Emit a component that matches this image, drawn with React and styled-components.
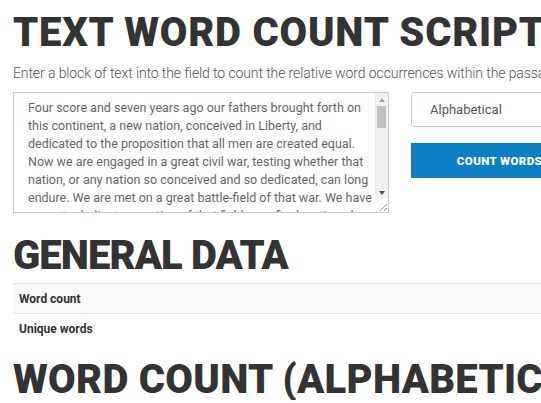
import React from 'react'
import styled, {createGlobalStyle} from 'styled-components'

const GlobalStyle = createGlobalStyle`
  html, body {
    margin: 0;
    padding: 0;
    background: #fff;
    overflow: hidden;
  }
  body {
    font-family: Roboto, "Liberation Sans", sans-serif;
    color: #333;
  }
`

const Page = styled.div`
  width: 760px;
  padding: 12.5px 13px 0;
  box-sizing: border-box;
`

const Title = styled.h1`
  margin: 0;
  font-family: Roboto, "Liberation Sans", sans-serif;
  font-weight: 900;
  font-size: 40px;
  line-height: 40px;
  letter-spacing: ${({spacing}) => `${spacing ?? 0}px`};
  color: #333;
  white-space: nowrap;
  margin-top: ${({top}) => (top ? `${top}px` : '0')};
`

const Lead = styled.p`
  margin: 11.5px 0 0;
  font-size: 14px;
  line-height: 18px;
  font-weight: 300;
  letter-spacing: -0.1px;
  color: #555;
  white-space: nowrap;
`

const FormRow = styled.div`
  display: flex;
  align-items: flex-start;
  gap: 22px;
  margin-top: 10px;
`

const Field = styled.div`
  display: flex;
  width: 376px;
  height: 121px;
  box-sizing: border-box;
  border: 1px solid #ccc;
  background: #fff;
`

const TextBox = styled.textarea`
  flex: 1;
  min-width: 0;
  box-sizing: border-box;
  padding: 6px 0 0 14px;
  border: none;
  font-family: Roboto, "Liberation Sans", sans-serif;
  font-size: 12.5px;
  line-height: 18px;
  color: #666;
  resize: none;
  margin: 0;
  outline: none;
  overflow: hidden;
`

const ScrollBar = styled.div`
  width: 13px;
  display: flex;
  flex-direction: column;
  background: #f1f1f1;
`

const Arrow = styled.div`
  height: 13px;
  display: flex;
  align-items: center;
  justify-content: center;

  &::before {
    content: '';
    width: 0;
    height: 0;
    border-left: 3.5px solid transparent;
    border-right: 3.5px solid transparent;
    ${({down}) =>
      down ? 'border-top: 4px solid #505050;' : 'border-bottom: 4px solid #a3a3a3;'}
  }
`

const Track = styled.div`
  flex: 1;
  padding: 0 2px;
`

const Thumb = styled.div`
  height: 22px;
  background: #c1c1c1;
`

const Corner = styled.div`
  height: 13px;
  background: #fff;
  display: flex;
  align-items: flex-end;
  justify-content: flex-end;
`

const Controls = styled.div`
  display: flex;
  flex-direction: column;
  gap: 16px;
  width: 177px;
`

const Select = styled.select`
  height: 35px;
  width: 100%;
  box-sizing: border-box;
  padding: 0 18px;
  border: 1px solid #ccc;
  border-radius: 3px;
  background: #fff;
  font-family: Roboto, "Liberation Sans", sans-serif;
  font-size: 13px;
  color: #555;
  appearance: none;
`

const Button = styled.button`
  height: 35px;
  width: 100%;
  border: none;
  background-color: #0a80c4;
  color: #fff;
  font-family: Roboto, "Liberation Sans", sans-serif;
  font-weight: 900;
  font-size: 11.5px;
  letter-spacing: 0.4px;
  text-transform: uppercase;
  cursor: pointer;
`

const Table = styled.div`
  margin-top: 7.5px;
  width: 100%;
`

const Row = styled.div`
  height: 30px;
  box-sizing: border-box;
  display: flex;
  align-items: center;
  padding: 0 6px;
  border-top: 1px solid #e2e2e2;
  background-color: ${({striped}) => (striped ? '#f9f9f9' : '#fff')};
  font-size: 12px;
  font-weight: 700;
  color: #333;
`

const text =
  'Four score and seven years ago our fathers brought forth on this continent, a new nation, conceived in Liberty, and dedicated to the proposition that all men are created equal. Now we are engaged in a great civil war, testing whether that nation, or any nation so conceived and so dedicated, can long endure. We are met on a great battle-field of that war. We have come to dedicate a portion of that field, as a final resting place for those who here gave their lives that that nation might live. It is altogether fitting and proper that we should do this.'

const Grip = () => (
  <svg width="11" height="11" viewBox="0 0 11 11">
    <path d="M10 3 L3 10 M10 7 L7 10" stroke="#9a9a9a" strokeWidth="1" />
  </svg>
)

export default function App() {
  return (
    <Page>
      <GlobalStyle />
      <Title spacing={0.8}>TEXT WORD COUNT SCRIPT</Title>
      <Lead>
        Enter a block of text into the field to count the relative word occurrences within the passage.
      </Lead>
      <FormRow>
        <Field>
          <TextBox defaultValue={text} />
          <ScrollBar>
            <Arrow />
            <Track>
              <Thumb />
            </Track>
            <Arrow down />
            <Corner>
              <Grip />
            </Corner>
          </ScrollBar>
        </Field>
        <Controls>
          <Select defaultValue="alpha">
            <option value="alpha">Alphabetical</option>
            <option value="freq">Frequency</option>
          </Select>
          <Button>Count words</Button>
        </Controls>
      </FormRow>
      <Title top={22.5} spacing={-0.9}>GENERAL DATA</Title>
      <Table>
        <Row striped>Word count</Row>
        <Row>Unique words</Row>
      </Table>
      <Title top={16.5} spacing={0.3}>WORD COUNT (ALPHABETICAL)</Title>
    </Page>
  )
}
